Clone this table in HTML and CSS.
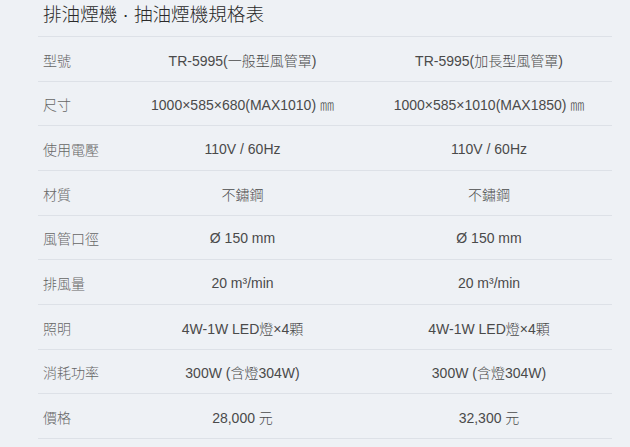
FILE: index.html
```html
<!DOCTYPE html>
<html lang="zh-Hant">
<head>
<meta charset="utf-8">
<link rel="stylesheet" href="styles.css">
</head>
<body>
<div class="wrap">
  <h2 class="title">排油煙機 · 抽油煙機規格表</h2>
  <div class="spec">
    <div class="row"><div class="lab">型號</div><div class="val">TR-5995(一般型風管罩)</div><div class="val">TR-5995(加長型風管罩)</div></div>
    <div class="row"><div class="lab">尺寸</div><div class="val">1000×585×680(MAX1010) ㎜</div><div class="val">1000×585×1010(MAX1850) ㎜</div></div>
    <div class="row"><div class="lab">使用電壓</div><div class="val">110V / 60Hz</div><div class="val">110V / 60Hz</div></div>
    <div class="row"><div class="lab">材質</div><div class="val">不鏽鋼</div><div class="val">不鏽鋼</div></div>
    <div class="row"><div class="lab">風管口徑</div><div class="val">Ø 150 mm</div><div class="val">Ø 150 mm</div></div>
    <div class="row"><div class="lab">排風量</div><div class="val">20 m³/min</div><div class="val">20 m³/min</div></div>
    <div class="row"><div class="lab">照明</div><div class="val">4W-1W LED燈×4顆</div><div class="val">4W-1W LED燈×4顆</div></div>
    <div class="row"><div class="lab">消耗功率</div><div class="val">300W (含燈304W)</div><div class="val">300W (含燈304W)</div></div>
    <div class="row"><div class="lab">價格</div><div class="val">28,000 元</div><div class="val">32,300 元</div></div>
  </div>
</div>
</body>
</html>
```
FILE: styles.css
```css
html, body {
  margin: 0;
  padding: 0;
  background: #eef1f5;
}
body {
  font-family: "Liberation Sans", Arial, "Noto Sans CJK TC", sans-serif;
  color: #4a4a4a;
  font-size: 14px;
  font-weight: 300;
}
.wrap {
  width: 574px;
  margin-left: 38px;
}
.title {
  margin: 0;
  height: 36px;
  padding-left: 5px;
  font-size: 18.6px;
  font-weight: 300;
  line-height: 30px;
  color: #2a2a2a;
  border-bottom: 1px solid #dde1e7;
}
.spec {
  display: flex;
  flex-direction: column;
}
.row {
  display: grid;
  grid-template-columns: 81px 247px 246px;
  height: 43.67px;
  align-items: center;
  border-bottom: 1px solid #dde1e7;
}
.lab {
  padding-left: 5px;
  color: #666;
  padding-top: 2px;
}
.val {
  text-align: center;
  padding-top: 2px;
}
```
